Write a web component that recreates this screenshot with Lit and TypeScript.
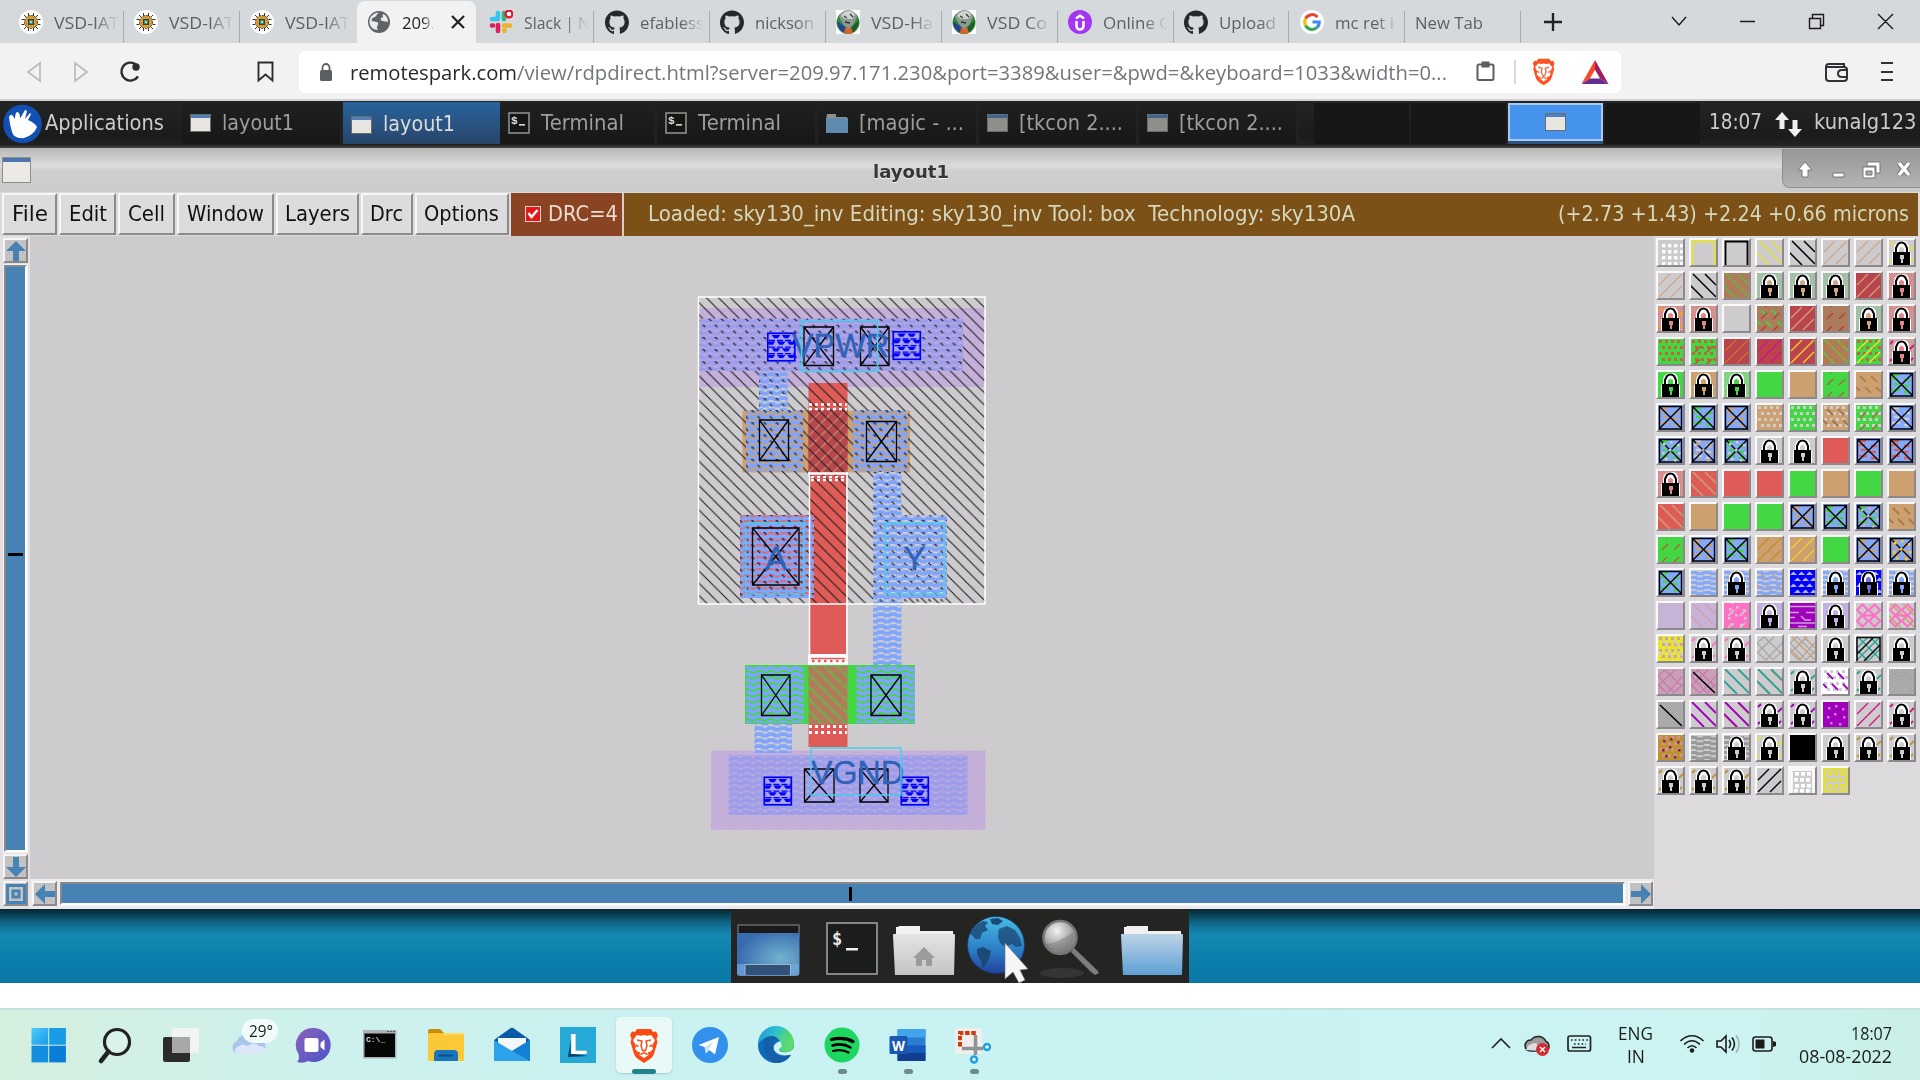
import { LitElement, html, svg, css } from "lit";
import { customElement, property } from "lit/decorators.js";

/** Text stretched horizontally to a given advance width. */
@customElement("fit-text")
class FitText extends LitElement {
  @property({ type: Number }) w = 0;
  static styles = css`
    :host { display: inline-block; white-space: pre; flex: none; }
    .run { display: inline-block; transform-origin: 0 50%; }
  `;
  firstUpdated() {
    const run = this.renderRoot.querySelector(".run") as HTMLElement;
    const natural = run.getBoundingClientRect().width;
    this.style.width = `${this.w}px`;
    if (natural) run.style.transform = `scaleX(${this.w / natural})`;
  }
  render() {
    return html`<span class="run"><slot></slot></span>`;
  }
}

const T = (text: any, w: number) => html`<fit-text .w=${w}>${text}</fit-text>`;

/* ---------- browser icons ---------- */
const chip = svg`<circle cx="12" cy="12" r="12" fill="#fff"/>
  <g stroke="#333" stroke-width="1" fill="none"><path d="M5 5l3 3M19 5l-3 3M5 19l3-3M19 19l-3-3M2.500 9.500h3M2.500 14.500h3M18.500 9.500h3M18.500 14.500h3M9.500 3v3M14.500 3v3M9.500 18v3M14.500 18v3"/></g>
  <circle cx="12" cy="12" r="6.500" fill="#d99a35" stroke="#5a3d12" stroke-width="1" stroke-dasharray="2 1"/><rect x="9" y="9" width="6" height="6" fill="#1d4d46"/><rect x="10.500" y="10.500" width="3" height="3" fill="#8fd6c0"/>`;
const github = svg`<path fill="#24292e" d="M12 .5C5.400.5 0 5.800 0 12.500c0 5.300 3.400 9.800 8.200 11.400.6.1.8-.3.8-.6v-2.200c-3.300.7-4-1.400-4-1.400-.6-1.400-1.400-1.800-1.400-1.800-1-.7.1-.7.1-.7 1.200.1 1.900 1.200 1.900 1.200 1.100 1.900 2.800 1.300 3.500 1 .1-.8.4-1.300.8-1.600-2.700-.3-5.500-1.300-5.500-6 0-1.300.5-2.300 1.200-3.200-.1-.3-.5-1.500.1-3.200 0 0 1-.3 3.300 1.200a11.500 11.500 0 0 1 6 0c2.300-1.500 3.300-1.200 3.300-1.200.7 1.700.2 2.900.1 3.200.8.8 1.200 1.900 1.200 3.200 0 4.600-2.800 5.600-5.500 5.900.4.400.8 1.100.8 2.200v3.300c0 .3.200.7.8.6A12 12 0 0 0 24 12.500C24 5.800 18.600.5 12 .5z"/>`;
const vsd = svg`<rect width="24" height="24" fill="#fff"/><ellipse cx="12" cy="12.500" rx="11.500" ry="11.500" fill="#2e8a38"/><path d="M1 11q1 9 8 12l1-5z" fill="#283c9c"/><path d="M23 10q0 8-7 13l-1-5z" fill="#1d5c28"/><path d="M9 18l6-1 2 6q-5 2-9 0z" fill="#d3652a"/><path d="M3 7q3-7 9-7 7 0 9 7l-4 8-5 4-5-5z" fill="#8d9a93"/><path d="M5 6q3-5 8-5 4 0 6 4l-3 4H9z" fill="#cfd4cf"/><path d="M8 6l3 2M14 4l3 3M9 12l5 1" stroke="#333" stroke-width="1.300"/>`;
const globeIc = svg`<circle cx="12" cy="12" r="11" fill="#5f6368"/><path d="M12 3c-3 1-2 3-4 4-2 .5-4 2-3 4 2 1 5 0 6 2s-1 2-1 4 1 3 1 3c-6 0-9-5-8.500-9C3 6 8 2 12 3zM16 4c3 1 5 4 5 8-2 0-3-1-5-1s-3-2-2-3 2 0 2-1-1-2 0-3z" fill="#e8eaec"/>`;
const slack = svg`<g stroke-width="4.600" stroke-linecap="round" fill="none"><path d="M3 9h5" stroke="#36c5f0"/><path d="M9 3v6" stroke="#36c5f0"/><path d="M15 3v6" stroke="#2eb67d"/><path d="M15 15.500h6" stroke="#ecb22e"/><path d="M15.500 20v1" stroke="#ecb22e"/><path d="M9 15v6M3 15.500h1" stroke="#e01e5a"/></g><circle cx="20" cy="4" r="3.400" fill="#fff" stroke="#e8112d" stroke-width="2.200"/>`;
const udemy = svg`<circle cx="12" cy="12" r="12" fill="#a435f0"/><path d="M8 8.500l4-3 4 3M8.500 11v5a3.500 3.500 0 0 0 7 0v-5" fill="none" stroke="#fff" stroke-width="2.600"/>`;
const google = svg`<circle cx="12" cy="12" r="12" fill="#fff"/><g fill="none" stroke-width="3"><path d="M17.500 7A7.300 7.300 0 0 0 5.600 8.500" stroke="#ea4335"/><path d="M5.600 8.500a7.300 7.300 0 0 0 0 7" stroke="#fbbc05"/><path d="M5.600 15.500a7.300 7.300 0 0 0 11.200 2.200" stroke="#34a853"/><path d="M16.800 17.700A7.300 7.300 0 0 0 19.300 12H12.500" stroke="#4285f4"/></g>`;
const lionShape = "M8 1h14l2 3 3-.5 2 3.500-1.500 4 1 3-3.500 12q-1 3-4 5l-6 4-6-4q-3-2-4-5L1.500 14l1-3L1 7l2-3.500L6 4z";
const lionFace = svg`<path fill="#fff" d="M8 7l4 .8L15 7l3 .8L22 7l4 5-3 6 1 3-3 3-2 0 .5 3-4.500 3-4.500-3L11 24l-2 0-3-3 1-3-3-6z"/><g fill="none" stroke="currentColor" stroke-width="1.500"><path d="M8 12l5 1-1 4.500 1 3.500M22 12l-5 1 1 4.500-1 3.500M12.500 21.500l2.500 1.500 2.500-1.500M15 23v2M11.500 26.500l3.500-2 3.500 2M6.500 17l3 1.500M23.500 17l-3 1.500"/></g>`;
const ico = (body: any, size = 24, vb = "0 0 24 24") => html`<svg class="ico" width=${size} height=${size} viewBox=${vb}>${body}</svg>`;

const TABS: { icon?: any; label: string; w: number; active?: boolean }[] = [
  { icon: chip, label: "VSD-IAT", w: 65 },
  { icon: chip, label: "VSD-IAT", w: 65 },
  { icon: chip, label: "VSD-IAT", w: 65 },
  { icon: globeIc, label: "209.", w: 33, active: true },
  { icon: slack, label: "Slack | N", w: 66 },
  { icon: github, label: "efabless", w: 64 },
  { icon: github, label: "nickson", w: 59 },
  { icon: vsd, label: "VSD-Ha", w: 62 },
  { icon: vsd, label: "VSD Co", w: 60 },
  { icon: udemy, label: "Online C", w: 67 },
  { icon: github, label: "Upload", w: 57 },
  { icon: google, label: "mc ret i", w: 59 },
  { label: "New Tab", w: 68 },
];

/* ---------- remote desktop panel ---------- */
const winIc = (dim = false) => html`<svg width="21" height="18" viewBox="0 0 21 18"><rect width="21" height="18" fill=${dim ? "#8f8e8a" : "#e6e5e0"}/><rect width="21" height="4" fill=${dim ? "#3f6492" : "#4f7fbd"}/><rect x=".5" y=".5" width="20" height="17" fill="none" stroke="#6b6b69"/></svg>`;
const termIc = html`<svg width="22" height="22" viewBox="0 0 22 22"><rect x="1" y="1" width="20" height="20" fill="#141515" stroke="#8d8d8b" stroke-width="1.600"/><text x="3" y="11.500" font-family="Liberation Mono" font-weight="700" font-size="11" fill="#ddd">$</text><rect x="11" y="12" width="6" height="1.700" fill="#ccc"/></svg>`;
const dirIc = html`<svg width="22" height="19" viewBox="0 0 22 19"><path d="M1 0h9v3h11v3H0z" fill="#8d8f8e"/><rect x="0" y="4" width="22" height="15" fill="#5f8bae"/></svg>`;
const TASKS = [
  { icon: winIc(), label: "layout1", w: 72, box: 161, cls: "" },
  { icon: winIc(), label: "layout1", w: 72, box: 156.5, cls: "on" },
  { icon: termIc, label: "Terminal", w: 83, box: 157, cls: "" },
  { icon: termIc, label: "Terminal", w: 83, box: 161, cls: "" },
  { icon: dirIc, label: "[magic - ...", w: 105, box: 161.5, cls: "" },
  { icon: winIc(true), label: "[tkcon 2....", w: 104, box: 160, cls: "" },
  { icon: winIc(true), label: "[tkcon 2....", w: 104, box: 160, cls: "" },
];

const MENUS = [
  { label: "File", box: 55, w: 36 },
  { label: "Edit", box: 57, w: 38 },
  { label: "Cell", box: 56.5, w: 37 },
  { label: "Window", box: 97, w: 77 },
  { label: "Layers", box: 83, w: 65 },
  { label: "Drc", box: 52, w: 33 },
  { label: "Options", box: 94.5, w: 75 },
];

/* ---------- layer palette ---------- */
const G = "#43d843", N = "#cda070", R = "#de5b58", DR = "#ba444e", BR = "#ad7c5c", BL = "#84a8fa", GY = "#cfcccf", TN = "#d2a88a", PU = "#c4b0dc", VI = "#a000bc", PK = "#ff70c4", TE = "#2ba296", YE = "#e8e52e", GO = "#b9952c";

/** Layer tile: op codes joined by "|", each "name,color". */
const TILES: string[] = [
  "g,#fff", `f,${YE}`, "f,#000", `d,${YE}`, "d,#000", `u,${TN}`, `u,${TN}`, `c,${YE}|L`,
  `u,${TN}`, "d,#000", `b,${BR}|d,#6ab33e`, `k,#7fb585|L,${TN}`, `k,#7fb585|L,${TN}`, `k,#7fb585|L,${TN}`, `b,${DR}|u,${N}`, `k,${R}|L,#e2858c`,
  `k,${R}|c,#f2a51c|L,#e2858c`, `k,${R}|L,#e2858c`, "", `b,${BR}|e,#4fc83f|v,#c0403c`, `b,${DR}|u,${N}`, `b,${BR}|v,#b4433f`, `k,#7fb585|L,${TN}`, `k,${R}|L,#e2858c`,
  `b,${G}|h,#c8633f`, `b,${G}|h,#c8633f|v,#c0503c`, `b,${DR}|u,#c8722e`, `b,${DR}|u,#cf1580`, `b,${DR}|u,#f7d12b`, `b,${BR}|d,#6cc23c|u,#c87838`, `b,${G}|h,#c8633f|u,#e8f22e`, `k,#c9807c|c,#cf1580|L,#e2858c`,
  `b,${G}|L,${G}`, `b,${N}|L,${N}`, `k,${G}|L,${G}`, `b,${G}`, `b,${N}`, `b,${G}|v,#a2703f`, `b,${N}|e,#b17e52`, `x,${G}`,
  `x,${N}`, `x,${G}`, `x,${N}`, `b,${N}|h,${GY}`, `b,${G}|h,${GY}`, `b,${N}|h,${GY}|e,#9f7550`, `b,${G}|h,${GY}|v,#a2703f`, `x,${GY}`,
  `x,${G}|h2,${GY}`, `x,${GY}|h2,${N}`, `x,${G}|h2,${GY}`, "L", "L", `b,${R}`, `x,${R}`, `x,${R}`,
  `k,${R}|L,#e2858c`, `b,${R}|d,${N}`, `b,${R}`, `b,${R}`, `b,${G}`, `b,${N}`, `b,${G}`, `b,${N}`,
  `b,${R}|d,${N}`, `b,${N}`, `b,${G}`, `b,${G}`, `x,${N}`, `x,${G}`, `x,${G}|h2,#d9a0c8`, `b,${N}|e,#a8794a`,
  `b,${G}|v,#a2703f`, `x,${N}`, `x,${G}`, `b,${N}|u,#c38b2e`, `b,${N}|u,#f0cf2b`, `b,${G}`, `x,${N}`, `x,${N}|h2,#f0cf2b`,
  `x,${G}`, `w,${BL}`, `w,${BL}|L,${BL}`, `w,${BL}|e,#aaa0b4`, "m,#0000fa", `w,${BL}|L,${BL}`, "m,#0000fa|L,#7070e0", `w,${BL}|L,${BL}`,
  `b,${PU}|k,#c9b6cf`, `b,${PU}|k,#c9b6cf|d,#cfa0b4`, `b,${PK}|v,${GY}|h2,${GY}`, `b,${PU}|L,${PU}`, `b,${VI}|j,#c9a2d6`, `b,${PU}|L,${PU}`, `z,${PK}`, `z,${PK}|d,${N}`,
  `b,${YE}|h,#d0a2a6|e,#cfcccf`, `c,${PK}|L`, `c,${PK}|L`, "y,#a5a3a5", `y,#a5a3a5|d,${N}`, "L", `d,${TE}|u,${TE}|F`, "L",
  `k,#c678a6|y,#c678a6`, `k,#c678a6|y,#c678a6|s,#000`, `d3,${TE}`, `d,${N}|d3,${TE}`, `c,${TE}|L`, `b,#fff|h,${GY}|e,${VI}`, `c,${TE}|L`, "k,#8c8c8c|d,#a6a6a6",
  "k,#8c8c8c|s,#000", `d3,${VI}`, `d,${N}|d3,${VI}`, `c,${VI}|L`, `c,${VI}|L`, `b,${VI}|h2,#c77cd6`, "u,#d1157e", "c,#d1157e|L",
  `b,${GO}|h,#dc8aa0|h2,#8a1a6a`, "w,#9a9a9a", "w,#9a9a9a|L", `c,${YE}|L`, "b,#000", "L", `c,${GO}|L`, `c,${GO}|L`,
  `c,${GO}|L`, `c,${GO}|L`, `c,${GO}|L`, "u,#000", "q,#fff", "q,#e5e22c",
];

const op = (code: string) => {
  const [k, c] = code.split(",");
  switch (k) {
    case "b": return svg`<rect width="25" height="25" fill=${c}/>`;
    case "g": return svg`${[5, 11, 17, 23].map((y) => [5, 11, 17, 23].map((x) => svg`<rect x=${x - 1} y=${y - 1} width="3.400" height="3.400" fill=${c}/>`))}`;
    case "q": return svg`<path d="M1.500 25V1.500h22V25" fill="none" stroke=${c} stroke-width="2.500"/>${[5, 11, 17, 22].map((y, j) => [5, 11, 17].map((x) => svg`<rect x=${x - (j % 2) * 1} y=${y - 1} width="4" height="3.600" fill=${c}/>`))}`;
    case "h": return svg`${[1, 7, 13, 19].map((y, j) => [1, 7, 13, 19].map((x) => svg`<rect x=${x + (j % 2) * 3} y=${y} width="3" height="3" fill=${c}/>`))}`;
    case "h2": return svg`${[[5, 5], [12, 3], [19, 6], [4, 14], [20, 14], [7, 20], [16, 21], [11, 11]].map(([x, y]) => svg`<rect x=${x} y=${y} width="2.500" height="2.500" fill=${c}/>`)}`;
    case "f": return svg`<path d="M1.500 25V1.500h22V25" fill="none" stroke=${c} stroke-width="1.800"/>`;
    case "d": return svg`<path d="M-1 12L12 25M2 1L25 24M14 1L25 12" stroke=${c} stroke-width="1.500"/>`;
    case "d3": return svg`<path d="M0 12L13 25M1 0L25 24M14 0L25 11" stroke=${c} stroke-width="1.900"/>`;
    case "s": return svg`<path d="M2 3L24 24" stroke=${c} stroke-width="1.600"/>`;
    case "u": return svg`<path d="M1 12L12 1M1 24L24 1M13 24L24 13" stroke=${c} stroke-width="1.400"/>`;
    case "v": return svg`<path d="M4 13l6-6M16 13l6-6M4 25l5-5M16 25l5-5M8 1l1-1" stroke=${c} stroke-width="1.600"/>`;
    case "e": return svg`<path d="M4 4l6 6M15 4l6 6M9 15l6 6M20 15l5 5M0 15l4 4" stroke=${c} stroke-width="1.800"/>`;
    case "k": return svg`<rect width="25" height="25" fill=${c} mask="url(#chk)"/>`;
    case "c": return svg`<path d="M1 5l3-3M21 10l4-4M1 22l2-2M21 22l3-3" stroke=${c} stroke-width="1.800"/>`;
    case "j": return svg`<path d="M0 3.500h25M0 9.500h9M16 9.500h9M0 14.500h5M11 13l4 4h6M0 20h25M8 23.500h9" fill="none" stroke=${c} stroke-width="1.500"/>`;
    case "w": return svg`<g stroke=${c} stroke-width="2.900" fill="none">${[2.500, 7.500, 12.500, 17.500, 22.500].map((y) => svg`<path d="M0 ${y}h5l1 1.200h6l1-1.200h6l1 1.200h5"/>`)}</g>`;
    case "m": return svg`<rect width="25" height="25" fill=${c}/>${[2, 8, 14, 20].map((y, j) => [4, 12, 20].map((x) => svg`<path d="M${x - 4 + (j % 2) * 4} ${y + 3}l3.500-3.500 3.500 3.500z" fill="#b9b4f2"/>`))}`;
    case "x": return svg`<rect width="25" height="25" fill=${BL}/><path d="M3 7h6M15 8h6M5 12h5M12 14h8M3 18h8M15 20h6M2 3h8" stroke=${c} stroke-width="2.600"/><path d="M1.500 25V1.500h22V25M1 24h23M2 2l21 21M23 2L2 23" fill="none" stroke="#000" stroke-width="1.400"/>`;
    case "F": return svg`<path d="M1 25V1.500h23V25M8 25L24 9M1 18L17 2" fill="none" stroke="#111" stroke-width="1.600"/>`;
    case "z": return svg`<path d="M1 7l5.500-5.500L12 7l-5.500 5.500zM13 7l5.500-5.500L24 7l-5.500 5.500zM1 18l5.500-5.500L12 18l-5.500 5.500zM13 18l5.500-5.500L24 18l-5.500 5.500zM12 7l1 0M12 18h1M8 12.500h9" fill="none" stroke=${c} stroke-width="2"/>`;
    case "y": return svg`<path d="M0 7l7-6 18 17M0 7l16 17 9-9M25 7L9 24 0 16M17 1L0 17" fill="none" stroke=${c} stroke-width="1.100"/>`;
    case "L": return svg`<path d="M5 12V8q0-6 7.500-7T20 8v4l2 1v12H3V13z" fill="#fff"/><path d="M7 12V8l2-4q3.500-3 7 0l2 4v4" fill="#fff" stroke="#000" stroke-width="2"/><path d="M10 12V8.500l2.500-2 2.500 2V12z" fill=${c || GY}/><rect x="4" y="12" width="17" height="13" fill="#000"/><path d="M11 15h4v4h-1v4h-2v-4h-1z" fill=${c || GY}/>`;
  }
  return svg``;
};

/* ---------- layout canvas ---------- */
const contact = (x: number, y: number, w: number, h: number) =>
  svg`<path d="M${x} ${y}h${w}v${h}h${-w}zM${x} ${y}l${w} ${h}M${x + w} ${y}l${-w} ${h}" fill="none" stroke="#000" stroke-width="1.300"/>`;
const box = (x: number, y: number, x2: number, y2: number, fill: string) =>
  svg`<rect x=${x} y=${y} width=${x2 - x} height=${y2 - y} fill=${fill}/>`;
const cyan = (x: number, y: number, x2: number, y2: number) =>
  svg`<rect x=${x} y=${y} width=${x2 - x} height=${y2 - y} fill="none" stroke="#45d0ea" stroke-width="1.500"/>`;
/* Rows of downward and upward wedges alternate inside each via. */
const via = (x: number, y: number) => svg`<g transform="translate(${x} ${y})"><rect width="28.500" height="29" fill="#a6a2f2"/>
  ${[0, 1, 2, 3].map((j) => [0, 1, 2].map((i) => {
    const cx = j % 2 ? 4 + i * 10.2 : 9 + i * 10.2;
    return cx > 25 ? svg`` : svg`<path d="M${cx - 4.300} ${2.500 + j * 6.600}h8.600l-2.400 3.200h-3.800z" fill="#0000fa"/>`;
  }))}<path d="M2 8h25M2 14.600h25M2 21.200h25" stroke="#0000fa" stroke-width="1.300" stroke-dasharray="6 2"/>
  <rect x=".8" y=".8" width="27" height="27.500" fill="none" stroke="#0000fa" stroke-width="1.700"/></g>`;
const label = (t: string, x: number, y: number, w: number) =>
  svg`<text x=${x} y=${y} textLength=${w} lengthAdjust="spacingAndGlyphs" font-family="Liberation Sans" font-size="33" fill="#2f62b8" stroke="#2f62b8" stroke-width=".4">${t}</text>`;

const layout = svg`
  <defs>
    <pattern id="hatch" width="12.200" height="12.200" patternUnits="userSpaceOnUse" patternTransform="translate(6 0)"><path d="M-1 -1L13.200 13.200M-1 11.200L1 13.200M11.200 -1L13.200 1" stroke="#1a1a1a" stroke-width="1.050"/></pattern>
    <pattern id="li" width="12.200" height="6" patternUnits="userSpaceOnUse"><path d="M-1 2.200h6l1.500 1.400h4.500l1.200-1.400h1" fill="none" stroke="#7fa5fc" stroke-width="3.700"/></pattern>
    <pattern id="lip" width="12.200" height="6" patternUnits="userSpaceOnUse"><rect width="12.200" height="6" fill="#b3a5e2"/><path d="M-1 2.200h6l1.500 1.400h4.500l1.200-1.400h1" fill="none" stroke="#9c9eec" stroke-width="3.600"/><path d="M7.500 1h2" stroke="#d2b4c8" stroke-width="1"/></pattern>
    <pattern id="pts" width="12.200" height="12.200" patternUnits="userSpaceOnUse"><path d="M1 2h2M2.500 3.300h1.500M7 8h2M8.500 9.300h1.500" stroke="#111" stroke-width="1.200"/></pattern>
    <pattern id="met" width="2.400" height="2.400" patternUnits="userSpaceOnUse"><rect width="2.400" height="2.400" fill="#c8b8d8"/><rect width="1.200" height="1.200" fill="#c0a4dc"/><rect x="1.200" y="1.200" width="1.200" height="1.200" fill="#c4a8da"/></pattern>
    <pattern id="tanh" width="12.200" height="12.200" patternUnits="userSpaceOnUse"><path d="M-1 13.200L13.200 -1" stroke="#cc8a62" stroke-width="1.200"/></pattern>
    <pattern id="grh" width="12.200" height="12.200" patternUnits="userSpaceOnUse"><path d="M-1 -1L13.200 13.200" stroke="#6bb546" stroke-width="1.900"/></pattern>
  </defs>
  ${box(698, 308, 985, 387, "url(#met)")}
  ${box(742.5, 410.5, 910, 472.5, "#cda070")}
  ${box(808.5, 383, 847.5, 472, R)}
  ${box(808.5, 410, 847.5, 472, "#b7474f")}${box(808.5, 410, 847.5, 472, "url(#tanh)")}
  ${box(810, 472, 846, 654, R)}
  ${box(698, 297, 985, 604, "url(#hatch)")}
  ${box(698, 318.5, 963, 371, "url(#lip)")}
  ${box(740, 515, 814, 598, "#de6b70")}
  ${box(740, 515, 814, 598, "url(#li)")}
  ${box(759, 371, 787.5, 410, "#cfcccf")}${box(759, 371, 787.5, 387, "#c5b2da")}${box(759, 371, 787.5, 410, "url(#li)")}
  ${box(746, 411, 803, 471, "#cda070")}${box(853, 411, 908, 471, "#cda070")}
  ${box(746, 411, 803, 471, "url(#li)")}${box(853, 411, 908, 471, "url(#li)")}
  ${box(873, 472, 901.5, 515, "#cfcccf")}${box(873, 515, 947, 598, "#cfcccf")}${box(873, 598, 901.5, 604, "#cfcccf")}
  ${box(873, 472, 901.5, 515, "url(#li)")}${box(873, 515, 947, 598, "url(#li)")}${box(873, 598, 901.5, 665, "url(#li)")}
  ${box(698, 318.5, 963, 371, "url(#pts)")}${box(759, 371, 787.5, 410, "url(#pts)")}
  ${box(746, 410, 803, 471, "url(#pts)")}${box(853, 410, 908, 471, "url(#pts)")}
  ${box(873, 472, 901.5, 515, "url(#pts)")}${box(873, 515, 947, 602, "url(#pts)")}${box(740, 515, 814, 598, "url(#pts)")}
  <path d="M809 404.500h38M809 409h38M811 480h36" stroke="#fff" stroke-width="2.500" stroke-dasharray="3 3"/>
  <path d="M808 473.500h40" stroke="#fff" stroke-width="2.500"/><path d="M811 477h35" stroke="#fff" stroke-width="2" stroke-dasharray="3 3"/>
  <path d="M809.500 473v182M847 473v182" stroke="#fff" stroke-width="1.500"/>
  <path d="M808 654h40v12h-40z" fill="#fff"/><path d="M811 658.500h34" stroke="${R}" stroke-width="1.500"/><path d="M812 661h33" stroke="${R}" stroke-width="2.400" stroke-dasharray="2.500 3.500"/>
  <rect x="698.500" y="297" width="286.500" height="307" fill="none" stroke="#fff" stroke-width="1.500"/>
  ${contact(759.5, 420, 29, 40.5)}${contact(866.5, 421.5, 30, 40)}
  ${cyan(746, 523, 803.5, 594)}${cyan(885.5, 523, 944, 594)}${contact(752.5, 528, 46.5, 57)}
  ${label("A", 765, 570, 22)}${label("Y", 903.5, 570, 22)}
  ${contact(804, 327, 29.5, 38.5)}${contact(860.5, 327, 28.5, 38.5)}${via(767, 332.5)}${via(892.5, 331)}
  ${label("VPWR", 792, 357, 97)}${cyan(801.5, 320.5, 877.5, 371.5)}
  ${box(745, 665, 915, 724, G)}${box(746, 666, 804, 723, "url(#li)")}${box(856.5, 666, 915, 723, "url(#li)")}
  ${box(808.5, 666, 847.5, 724, "#b07c5c")}${box(808.5, 666, 847.5, 724, "url(#grh)")}
  ${box(808.5, 724, 847.5, 747, R)}<path d="M809 726.500h38M809 732.500h38" stroke="#fff" stroke-width="3" stroke-dasharray="3 3"/>
  ${contact(761.5, 675, 28.5, 40.5)}${contact(871, 675, 30, 40.5)}
  ${box(711, 750.5, 985.5, 830, "url(#met)")}${box(754.5, 724, 792, 753, "url(#li)")}
  ${box(728.5, 755, 967.5, 815, "url(#lip)")}
  ${contact(804.5, 769, 29.5, 33)}${contact(860, 769, 28, 33)}${via(763.5, 776.5)}${via(900.5, 776.5)}
  ${label("VGND", 811, 783.5, 93)}${cyan(811, 748, 901, 795)}`;

/* ---------- desktop dock ---------- */
const dock = html`<svg width="458" height="74" viewBox="731 909 458 74">
  <defs>
    <radialGradient id="dk2" cx=".7" cy=".6" r=".7"><stop offset="0" stop-color="#72b4cf"/><stop offset="1" stop-color="#396aaf"/></radialGradient>
    <linearGradient id="fg" x2="0" y2="1"><stop offset="0" stop-color="#e4e4e4"/><stop offset="1" stop-color="#c4c4c4"/></linearGradient>
    <linearGradient id="fb" x2="0" y2="1"><stop offset="0" stop-color="#bdd3e6"/><stop offset="1" stop-color="#5ea0d4"/></linearGradient>
    <linearGradient id="gl" x2="0" y2="1"><stop offset="0" stop-color="#48bde6"/><stop offset=".6" stop-color="#2a7cc4"/><stop offset="1" stop-color="#23419a"/></linearGradient>
    <radialGradient id="mg" cx=".4" cy=".3" r=".8"><stop offset="0" stop-color="#f2f2f2"/><stop offset="1" stop-color="#686868"/></radialGradient>
  </defs>
  <rect x="738" y="925" width="61" height="12" fill="#1a1a1a" stroke="#8c8c8c"/>
  <rect x="737" y="933" width="62.500" height="42.500" rx="2" fill="url(#dk2)"/><path d="M737 964h8v11h46v-11h8v9q0 3-3 3h-56q-3 0-3-3z" fill="#76abe0" opacity=".7"/><path d="M745 975v-10.500h45.500V975" fill="#32527a" stroke="#9fb5cd"/>
  <rect x="827" y="923" width="50" height="51" fill="#1b1c1c" stroke="#858585" stroke-width="2"/><text x="832" y="945" font-family="DejaVu Sans Mono" font-weight="700" font-size="17" fill="#e4e4e4">$</text><rect x="846" y="948" width="12" height="2.500" fill="#eee"/>
  <path d="M896 933v-6h2l1-1h21v5h33v7h-58z" fill="#f2f2f2"/><path d="M893 935q0-1 1-1h60q1 0 1 1l-1 40h-59z" fill="url(#fg)"/><path d="M924 947l11 11h-3v8h-6v-6h-4v6h-6v-8h-3z" fill="#9b9b9b"/>
  <circle cx="996" cy="945" r="28.500" fill="url(#gl)" stroke="#163a6e" stroke-width=".7"/><g fill="#1c4a78"><path d="M970 934q3-9 13-13l5 1-3 4 3 4-6 3-2 6-5 0-2-3z" opacity=".85"/><path d="M977 949l6-2 8 4-2 8-6 10-2-8-4-7z"/><path d="M998 937l1-8 8-3 8 4 5 8 2 8-6 1-4-3-7 3-5-4z" opacity=".8"/><path d="M990 919l8-1 5 3-5 4-6-1z"/></g>
  <path d="M1005 943v36l8-7 6 11 6-3-5-10 8-1z" fill="#f6f6f6" stroke="#777" stroke-width=".6"/>
  <ellipse cx="1062" cy="973" rx="22" ry="5" fill="#494a49" opacity=".45"/><path d="M1074 948l23 22 2 3-4 2-4-3-20-20z" fill="#7d7d7d"/><circle cx="1060" cy="937.500" r="16.500" fill="url(#mg)" stroke="#767676" stroke-width="2.500"/><path d="M1046 944q9 0 28-12 0 18-14 20-10 0-14-8z" fill="#777" opacity=".45"/>
  <path d="M1124 933v-6h2l1-1h21v5h33v7h-58z" fill="#f0f0f0"/><path d="M1121 935q0-1 1-1h60q1 0 1 1l-1 40h-59z" fill="url(#fb)"/>
</svg>`;

/* ---------- host taskbar ---------- */
const APPS = [
  svg`<defs><linearGradient id="wn" x2="1" y2="1"><stop offset="0" stop-color="#4fcbfa"/><stop offset="1" stop-color="#1a9be6"/></linearGradient></defs><rect x=".5" y="1" width="16.700" height="16.700" fill="url(#wn)"/><rect x="18.200" y="1" width="16.700" height="16.700" fill="#1a9be6"/><rect x=".5" y="18.700" width="16.700" height="16.700" fill="#148fe0"/><rect x="18.200" y="18.700" width="16.700" height="16.700" fill="#0a7dd8"/>`,
  svg`<circle cx="20" cy="15" r="12.500" fill="#dff4f2" fill-opacity=".6" stroke="#222" stroke-width="3.200"/><path d="M11.500 24.500L4 34" stroke="#222" stroke-width="4.500" stroke-linecap="round"/>`,
  svg`<rect x="0" y="10" width="27" height="25" rx="2" fill="#2b2b2b"/><rect x="9" y="1" width="27" height="25" rx="2" fill="#f4f4f4" opacity=".9"/><rect x="9" y="10" width="18" height="16" fill="#a8a8a8"/>`,
  svg`<path d="M7 27a7 7 0 0 1 0-13 9 9 0 0 1 16-2 8 8 0 0 1 8 15z" fill="#aac4ee"/><path d="M6 27a5 5 0 0 1 3-8q4-3 8 0 8-5 12 0 7 0 6 5-1 3-4 3z" fill="#dce6fa"/><rect x="12" y="-8" width="36" height="24" rx="12" fill="#f1fbfa"/>`,
  svg`<defs><linearGradient id="ch" x2="1" y2="1"><stop offset="0" stop-color="#8b63b8"/><stop offset="1" stop-color="#4c52cc"/></linearGradient></defs><path d="M18 1a17 17 0 1 1-6 33q-5 3-11 1 3-3 1.500-8A17 17 0 0 1 18 1z" fill="url(#ch)"/><rect x="8.500" y="11" width="14" height="14" rx="2" fill="#fff"/><path d="M24.500 16l4-3.500v11l-4-3.500z" fill="#fff"/>`,
  svg`<rect x="1" y="3" width="33.500" height="28.500" fill="#aeb2b6"/><rect x="2.500" y="6.500" width="30.500" height="23.500" fill="#070707"/><text x="4" y="14.500" font-family="Liberation Mono" font-weight="700" font-size="8" fill="#ddd">C:\\_</text><path d="M25 4.500h8" stroke="#555" stroke-dasharray="2 1"/>`,
  svg`<path d="M0 4q0-2 2-2h10l4 4v5H0z" fill="#c98c09"/><rect x="0" y="6" width="36" height="28" rx="1" fill="#fbc937"/><path d="M0 8h14l3-2h19v2z" fill="#ffd95a"/><path d="M6 34V27q0-4 4-4h16q4 0 4 4v7z" fill="#1976bd"/><path d="M10 28.500h15" stroke="#0c4d86" stroke-width="2"/>`,
  svg`<path d="M0 13L16 1.500q2-1.500 4 0L36 13v6H0z" fill="#0a5aa8"/><path d="M4 11h28v12H4z" fill="#f5f8fb"/><path d="M0 13l18 11 18-11v21H0z" fill="#2ba2ea"/><path d="M36 13v21L18 24z" fill="#1480d2"/>`,
  svg`<rect width="36" height="36" fill="#27a9d8"/><path d="M12 6L8 30l20-1-15-2z" fill="#0e3a66"/><text x="9" y="27" font-family="Liberation Sans" font-weight="700" font-size="30" fill="#fff">L</text>`,
  svg`<g transform="translate(3 1)" color="#fb4b14"><path d=${lionShape} fill="#fb4b14"/>${lionFace}</g>`,
  svg`<circle cx="18" cy="18" r="18" fill="#3390ec"/><path d="M6.500 18L27 10l-4 17.500-6-4.500-3 3.500-1.500-6.500z" fill="#fff"/><path d="M13 20.500l8.500-6-5.500 8.500-2 2.500z" fill="#c3def8"/>`,
  svg`<defs><linearGradient id="eg" x2="1" y2=".4"><stop offset="0" stop-color="#2390d8"/><stop offset=".5" stop-color="#2cc0cf"/><stop offset="1" stop-color="#66e04a"/></linearGradient></defs><circle cx="18" cy="18" r="18" fill="#0f6cbd"/><path d="M0 17A18 18 0 0 1 36 17q0 8-8 8-6 0-7-3 3-3 1-8-6-8-15-3-4 2-7 6z" fill="url(#eg)"/><path d="M7 11q7-4 12 0-7 4-4 12 4 9 18 5-6 9-17 8Q3 29 7 11z" fill="#155fa8"/><path d="M22 14q4 5-1 8 1 4 8 3 4 0 7-4v7l-5 0q-11 2-15-5-2-6 6-9z" fill="#cdf3f2"/><path d="M22 14q4 4 0 8 2 3 6 3 7 0 8-8-2-9-14-9z" fill="#55d68a" opacity=".55"/>`,
  svg`<circle cx="18" cy="18" r="17.500" fill="#1ed760"/><g fill="none" stroke="#000" stroke-linecap="round"><path d="M7.500 12.500q12-3 21.500 2" stroke-width="3.200"/><path d="M8.500 18.500q10-3 18 2" stroke-width="2.600"/><path d="M9 24q9-2.500 15.500 1.500" stroke-width="2.200"/></g>`,
  svg`<rect x="7.500" y="2" width="28" height="32" rx="1.500" fill="#2b7cd3"/><rect x="7.500" y="2" width="28" height="8.500" fill="#41a5ee"/><rect x="7.500" y="18.500" width="28" height="8" fill="#185abd"/><rect x="7.500" y="26" width="28" height="8" fill="#103f91"/><rect x="-.5" y="9" width="18" height="18" rx="1.500" fill="#1b57b5"/><text x="2" y="23.500" textLength="13" lengthAdjust="spacingAndGlyphs" font-family="Open Sans" font-weight="700" font-size="14" fill="#fff">W</text>`,
  svg`<rect x="-1" y="1" width="27" height="26" rx="2" fill="#f1eeee"/><path d="M4 19.500V6h16" fill="none" stroke="#cf3c10" stroke-width="4" stroke-dasharray="4.500 1.700"/><path d="M19.500 8v20M6 21.500h21" stroke="#8f9396" stroke-width="3.500"/><circle cx="31" cy="20" r="3" fill="#e9fbff" stroke="#1ea0e0" stroke-width="2.400"/><circle cx="18" cy="32.500" r="3" fill="#e9fbff" stroke="#1ea0e0" stroke-width="2.400"/>`,
];

@customElement("app-root")
class AppRoot extends LitElement {
  static styles = css`
    :host { display: flex; flex-direction: column; width: 1920px; height: 1080px; overflow: hidden; background: #fff; font-family: "Open Sans", "Noto Sans", sans-serif; }
    svg { display: block; flex: none; }
    .row { display: flex; flex: none; box-sizing: border-box; }

    .tabs { height: 43px; background: #d5d9dc; padding-left: 8px; align-items: stretch; font-size: 17px; color: #5b6167; }
    .tab { width: 115.900px; flex: none; box-sizing: border-box; display: flex; align-items: center; padding-left: 10.500px; margin-top: 1px; position: relative; line-height: 43px; }
    .tab .ico { margin-right: 11px; }
    .tab .clip { width: 68px; overflow: hidden; mask-image: linear-gradient(90deg, #000 60%, transparent 95%); }
    .tab .wide { width: 80px; mask-image: none; margin-left: -1px; }
    .tab::after { content: ""; position: absolute; right: 0; top: 10px; width: 1px; height: 32px; background: #a9adb1; }
    .tab.on { width: 119px; background: #f2f2f2; border-radius: 8px 8px 0 0; color: #222; margin-left: 1px; margin-right: 2.500px; }
    .tab.on::after, .tab.pre::after { display: none; }
    .tab.on .clip { width: 34px; margin-right: 15px; }
    .winctl { margin-left: auto; display: flex; align-items: center; }
    .plus { margin-left: 22.500px; align-self: center; }

    .toolbar { height: 58px; background: #f2f2f2; border-bottom: 2px solid #cfd1d3; align-items: center; }
    .addr { display: flex; align-items: center; height: 42px; width: 1322px; background: #fff; border-radius: 6px; margin-left: 25px; margin-top: 1px; font-size: 20.500px; color: #72767a; }
    .addr .host { color: #27292c; }
    .addr fit-text { margin-left: 17px; line-height: 42px; }

    .panel { height: 47px; background: linear-gradient(#232524, #1b1b1b 80%, #242424); border-bottom: 2px solid #3c3d3c; font-family: "DejaVu Sans", sans-serif; font-size: 20.500px; color: #9d9d9a; align-items: flex-start; }
    .apps { display: flex; align-items: center; width: 182px; color: #cbcbc8; height: 45px; line-height: 40px; }
    .apps svg { margin: 0 3px; }
    .apps fit-text { margin-top: -2px; }
    .task { display: flex; align-items: center; height: 42px; box-sizing: border-box; padding-left: 8px; margin-top: 1px; background: linear-gradient(#1f2020, #171717); border-radius: 3px; border-right: 3px solid #202121; flex: none; }
    .task fit-text { margin-left: 11px; line-height: 38px; margin-top: -1px; }
    .task.on { background: linear-gradient(#29639c, #28456a); border-right: 0; border-radius: 0; color: #dcdcda; }
    .task.on svg { margin-top: 4px; }
    .task.on fit-text { margin-top: 1px; }
    .pager { display: flex; margin-left: 15px; padding-top: 2px; }
    .desk { width: 95px; height: 41px; margin-right: 2px; background: #171717; }
    .desk.on { background: #4593ec; box-sizing: border-box; border: 2px solid #a7c9f2; height: 38px; box-shadow: 0 3px 0 #2b537e; display: flex; align-items: center; justify-content: center; }
    .clock { margin-left: auto; padding-right: 4px; line-height: 43px; color: #cbcbc8; display: flex; }

    .title { height: 44px; background: linear-gradient(#b7b7b7, #cfcfcf 25%, #dcdcdc 42%, #cfcfcf 50%, #cbcbcb); align-items: center; font: bold 18px "DejaVu Sans", sans-serif; color: #363636; text-shadow: 0 1px 1px #f5f5f5; justify-content: space-between; }
    .title .cluster { align-self: flex-start; margin-top: 1px; width: 138px; height: 39px; background: linear-gradient(#969696, #b4b4b4); border-radius: 0 0 0 8px; border: 1px solid #8d8d8d; border-top: 0; border-right: 0; box-sizing: border-box; display: flex; align-items: center; }
    .title .mid { flex: 1; padding: 2px 0 0 841px; }

    .menus { height: 44px; background: #dddadd; padding: 1px 2px 0; font: 20.500px "DejaVu Sans", sans-serif; color: #111; border-top: 0; }
    .menu { height: 42px; margin-right: 2px; box-sizing: border-box; border: 2px solid; border-color: #f8f7f8 #8c8a8c #8c8a8c #f8f7f8; background: #dedbde; display: flex; justify-content: center; line-height: 38px; }
    .drc { width: 113px; height: 43px; background: #8a4424; color: #ecdccf; display: flex; align-items: center; box-sizing: border-box; padding: 0 0 1px 14px; border-right: 2px solid #d8cfc4; }
    .drc fit-text { margin-left: 7px; }
    .status { flex: 1; height: 43px; box-sizing: border-box; background: #7b5117; color: #d6d8be; display: flex; justify-content: space-between; align-items: center; padding: 0 9px 2px 24px; }

    .body { height: 673px; background: #dddadd; }
    .left { width: 30px; display: flex; flex-direction: column; align-items: center; padding: 2px 0 0 1px; gap: 2px; box-sizing: border-box; background: #e2e0e2; }
    .btn { width: 25px; height: 25px; box-sizing: border-box; border: 2px solid; border-color: #f6f5f6 #8a888a #8a888a #f6f5f6; background: #c3c1c1; display: flex; align-items: center; justify-content: center; flex: none; }
    .trough { background: #4682b4; border: 2px solid; border-color: #85878b #fff #fff #85878b; box-sizing: border-box; display: flex; align-items: center; justify-content: center; outline: 1px solid #f4f3f4; }
    .vt { width: 23px; height: 587px; }
    .vt .mark { width: 15px; height: 3px; background: #000; margin-bottom: 9px; }
    .mid-col { width: 1624px; display: flex; flex-direction: column; }
    .canvas { background: #cecbce; height: 643px; overflow: hidden; }
    .hbar { display: flex; align-items: center; height: 30px; padding: 0 0 1px 2px; gap: 3px; background: #ebe9eb; box-sizing: border-box; }
    .ht { width: 1565px; height: 23px; }
    .ht .mark { width: 3px; height: 14px; background: #000; margin-left: 15px; }
    .pal { display: grid; grid-template-columns: repeat(8, 29px); gap: 4px 4.050px; align-content: start; padding: 1.500px 0 0 2px; }
    .tile { width: 29px; height: 29px; box-sizing: border-box; border: 2px solid; border-color: #faf9fa #8b898b #8b898b #faf9fa; background: #cecbce; }

    .desktop { height: 74px; background: linear-gradient(#06262f, #0d6484 18%, #1488b2 34%, #0c80ac 65%, #0a78a6); justify-content: center; }
    .dock { background: #242523; border: 0; }
    .gap { height: 25px; }

    .taskbar { height: 72px; background: linear-gradient(90deg, #d5efdf, #cdf1ee 18%, #c8f2f2 45%, #cdf3f3 90%, #c9efe6); border-top: 2px solid #c4e2de; align-items: flex-start; padding-left: 16.300px; box-sizing: border-box; color: #1a1c1c; }
    .app { width: 66.080px; height: 56px; margin-top: 7px; display: flex; flex-direction: column; align-items: center; position: relative; z-index: 0; }
    .app svg { margin-top: 10px; overflow: visible; }
    .app .plate { position: absolute; inset: 0 5px; background: #e8f9f8; border-radius: 5px; box-shadow: 0 1px 2px #a5cccb; z-index: -1; }
    .ind { width: 9px; height: 5px; border-radius: 3px; background: #6e8a8b; margin-top: 6px; flex: none; }
    .app.on .ind { width: 24px; background: #23808d; }
    .badge { position: absolute; left: 34px; top: 2px; font-size: 16.500px; line-height: 24px; }
    .tray { margin-left: auto; display: flex; align-items: flex-start; padding-right: 28px; font-size: 17.500px; }
    .stack { display: flex; flex-direction: column; padding-top: 12px; }
    .stack fit-text { line-height: 22.500px; }
    .lang { align-items: center; margin-right: 26.500px; }
    .when { align-items: flex-end; margin-left: 21.500px; }
  `;

  render() {
    const active = TABS.findIndex((t) => t.active);
    return html`
      <div class="row tabs">
        ${TABS.map((t, i) => html`<div class="tab ${t.active ? "on" : ""} ${i === active - 1 ? "pre" : ""}">
          ${t.icon ? ico(t.icon) : ""}<div class="clip ${t.icon ? "" : "wide"}">${T(t.label, t.w)}</div>
          ${t.active ? html`<svg width="14" height="14" viewBox="0 0 14 14"><path d="M1 1l12 12M13 1L1 13" stroke="#222" stroke-width="2.200"/></svg>` : ""}
        </div>`)}
        <svg class="plus" width="18" height="18" viewBox="0 0 18 18"><path d="M9 0v18M0 9h18" stroke="#222" stroke-width="2.400"/></svg>
        <svg class="winctl" width="262" height="43" viewBox="1658 0 262 43"><g fill="none" stroke="#1b1b1b" stroke-width="1.400"><path d="M1672 17l7 8 7-8M1740 21.500h15M1809.500 18.500h11v10h-11zM1812.500 18v-3.500h11v11h-3M1878 14l15 15M1893 14l-15 15"/></g></svg>
      </div>
      <div class="row toolbar">
        <svg width="274" height="56" viewBox="0 43 274 56"><g fill="none" stroke-width="1.700" stroke="#b9bbbe"><path d="M40 63v18l-12-9zM75 63v18l12-9z"/></g>
          <path d="M136 64.500a9 9 0 1 0 2 12" fill="none" stroke="#2b2d31" stroke-width="2.400"/><circle cx="136" cy="67" r="3.700" fill="#2b2d31"/>
          <path d="M258.500 62.500h14v18l-7-6-7 6z" fill="none" stroke="#2b2d31" stroke-width="1.900"/></svg>
        <div class="addr">
          <svg width="34" height="42" viewBox="299 51 34 42"><rect x="320" y="70" width="12" height="11" rx="1.500" fill="#5b5f64"/><path d="M322.500 71v-3.500a3.500 3.500 0 0 1 7 0V71" fill="none" stroke="#5b5f64" stroke-width="1.800"/></svg>
          ${T(html`<span class="host">remotespark.com</span>/view/rdpdirect.html?server=209.97.171.230&amp;port=3389&amp;user=&amp;pwd=&amp;keyboard=1033&amp;width=0...`, 1097)}
          <svg width="174" height="42" viewBox="1447 51 174 42"><rect x="1477.500" y="64.500" width="16" height="15.500" rx="1.500" fill="none" stroke="#5b5f64" stroke-width="2"/><rect x="1481.500" y="61.500" width="8" height="6" fill="#5b5f64"/><path d="M1515 60v24" stroke="#c9cbcd" stroke-width="1.500"/>
            <g transform="translate(1532 58) scale(.78)" color="#fb5422"><path d=${lionShape} fill="#fb5422"/>${lionFace}</g>
            <path d="M1595 60l-13.500 24 8.500-5.500 5-9z" fill="#ff4724"/><path d="M1595 60l13.500 24-8.500-5.500-5-9z" fill="#9e1f63"/><path d="M1581.500 84h27l-8.500-5.500h-10z" fill="#662d91"/></svg>
        </div>
        <svg width="298" height="56" viewBox="1621 43 298 56"><g fill="none" stroke="#2f3236" stroke-width="2"><path d="M1845 64h-16q-3 0-3 3v11q0 3 3 3h15q3 0 3-3v-8q0-3-3-3h-17M1848 70h-6q-4 0-4 3.500t4 3.500h6M1844 67v-3"/><path d="M1881 63h12M1881 72h12M1881 80h12" stroke-width="2.200"/></g></svg>
      </div>

      <div class="row panel">
        <div class="apps"><svg width="39" height="40" viewBox="0 0 39 40"><circle cx="19.500" cy="20" r="19.300" fill="#1250b4"/><path d="M7 20l-1-7q2-4 4-1l2 3q0-6 2-7 3 0 3 6l1-1 4-7 2 1-2 8 5-6 1 1-3 6q7 3 9 7-3 8-13 11-10 1-12-6z" fill="#fff"/></svg>${T("Applications", 119)}</div>
        ${TASKS.map((t) => html`<div class="task ${t.cls}" style="width:${t.box}px">${t.icon}${T(t.label, t.w)}</div>`)}
        <div class="pager"><div class="desk"></div><div class="desk"></div><div class="desk on">${winIc()}</div><div class="desk"></div></div>
        <div class="clock">${T("18:07", 53)}
          <svg width="52" height="44" viewBox="1762 101 52 44"><path d="M1782 112l7 8h-4.500v9h-5v-9h-4.500zM1795 137l-7-8h4.500v-9h5v9h4.500z" fill="#f0f0ee"/></svg>${T("kunalg123", 102.5)}</div>
      </div>

      <div class="row title">
        <svg width="32" height="44" viewBox="0 148 32 44"><rect x="2.500" y="157.500" width="28" height="25" fill="#eceae6" stroke="#8e8e8e"/><rect x="3" y="158" width="27" height="4" fill="#4a74ac"/></svg>
        <div class="mid">${T("layout1", 76)}</div>
        <div class="cluster"><svg width="138" height="38" viewBox="1782 149 138 38"><g fill="#fff" stroke="#777" stroke-width="1"><path d="M1804 162l7 8h-4v7h-6v-7h-4z"/><path d="M1832 173h11v4h-11z"/><path d="M1866 162h13v11h-4v-7h-9zM1862 167h12v11h-12zM1865 171v4h6v-4z" fill-rule="evenodd"/></g><path d="M1898 163l10 12M1908 163l-10 12" stroke="#777" stroke-width="5.500"/><path d="M1898 163l10 12M1908 163l-10 12" stroke="#fff" stroke-width="3.500"/></svg></div>
      </div>

      <div class="row menus">
        ${MENUS.map((m) => html`<div class="menu" style="width:${m.box}px">${T(m.label, m.w)}</div>`)}
        <div class="drc"><svg width="16" height="16" viewBox="0 0 16 16"><rect width="16" height="16" fill="#e51616" stroke="#f3d5cf" stroke-width="2"/><path d="M3.500 7l3 4 6-7" fill="none" stroke="#fff" stroke-width="2.500"/></svg>${T("DRC=4", 70)}</div>
        <div class="status">${T("Loaded: sky130_inv Editing: sky130_inv Tool: box  Technology: sky130A", 707)}${T("(+2.73 +1.43) +2.24 +0.66 microns", 351)}</div>
      </div>

      <div class="row body">
        <div class="left">
          <div class="btn"><svg width="20" height="20" viewBox="0 0 20 20"><path d="M10 0l10 10h-7v10H7V10H0z" fill="#4682b4"/></svg></div>
          <div class="trough vt"><div class="mark"></div></div>
          <div class="btn"><svg width="20" height="20" viewBox="0 0 20 20"><path d="M10 20L0 10h7V0h6v10h7z" fill="#4682b4"/></svg></div>
          <div class="btn"><svg width="20" height="20" viewBox="0 0 20 20"><path d="M1.500 1.500h17v17h-17zM7 7h6v6H7z" fill="none" stroke="#4682b4" stroke-width="3"/></svg></div>
        </div>
        <div class="mid-col">
          <svg class="canvas" width="1624" height="643" viewBox="30 236 1624 643">${layout}</svg>
          <div class="hbar">
            <div class="btn"><svg width="20" height="20" viewBox="0 0 20 20"><path d="M0 10L10 0v7h10v6H10v7z" fill="#4682b4"/></svg></div>
            <div class="trough ht"><div class="mark"></div></div>
            <div class="btn"><svg width="20" height="20" viewBox="0 0 20 20"><path d="M20 10L10 0v7H0v6h10v7z" fill="#4682b4"/></svg></div>
          </div>
        </div>
        <div class="pal">
          ${TILES.map((t) => html`<div class="tile"><svg width="25" height="25" viewBox="0 0 25 25"><defs><pattern id="cp" width="2.400" height="2.400" patternUnits="userSpaceOnUse"><rect width="1.300" height="1.300" fill="#fff"/><rect x="1.200" y="1.200" width="1.200" height="1.200" fill="#fff"/></pattern><mask id="chk"><rect width="25" height="25" fill="url(#cp)"/></mask></defs>${t ? t.split("|").map(op) : ""}</svg></div>`)}
        </div>
      </div>

      <div class="row desktop"><div class="dock">${dock}</div></div>
      <div class="row gap"></div>

      <div class="row taskbar">
        ${APPS.map((a, i) => html`<div class="app ${i === 9 ? "on" : ""}">${i === 9 ? html`<div class="plate"></div>` : ""}
          <svg width="36" height="36" viewBox="0 0 36 36">${a}</svg>
          ${i === 3 ? html`<div class="badge">${T("29°", 24)}</div>` : ""}
          ${i === 9 || i > 11 ? html`<div class="ind"></div>` : ""}</div>`)}
        <div class="tray">
          <svg width="129" height="70" viewBox="1488 1010 129 70"><path d="M1491 1048l9-9 9 9" fill="none" stroke="#222" stroke-width="1.600"/>
            <path d="M1530 1051q-6 0-6-6 1-5 6-5 3-4 8-3.500 5 .5 7 5 3 1 3 5 0 4-4 4.500z" fill="#9c9c9c" stroke="#222" stroke-width="1.500"/><path d="M1525 1050q1-6 10-7l6 8z" fill="#dedede"/><circle cx="1541.500" cy="1049.500" r="6.500" fill="#d32a33"/><path d="M1539 1047l5 5M1544 1047l-5 5" stroke="#fff" stroke-width="1.400"/>
            <rect x="1567" y="1036" width="22.500" height="15" rx="2" fill="none" stroke="#222" stroke-width="1.700"/><path d="M1570 1040h17M1573 1044h12" stroke="#222" stroke-width="1.600" stroke-dasharray="1.600 2.200"/><path d="M1571 1047.500h14" stroke="#222" stroke-width="1.500"/></svg>
          <div class="stack lang">${T("ENG", 35)}${T("IN", 18)}</div>
          <svg width="98" height="70" viewBox="1680 1010 98 70"><g fill="none" stroke="#1c1c1c" stroke-width="1.600"><path d="M1680.500 1041q11.500-10.500 23 0M1684 1044.500q8-7.500 16 0M1687.500 1048q4.500-4.500 9 0"/><path d="M1717 1041h4l5-5v16l-5-5h-4zM1729 1040q3 4 0 8M1732 1037.500q5 6.500 0 13"/><path d="M1736 1035q6 9 0 18" stroke="#9bb9b8"/><rect x="1753" y="1037" width="19" height="14" rx="2.500"/></g><circle cx="1692" cy="1050.500" r="2.200" fill="#1c1c1c"/><rect x="1755.500" y="1039.500" width="9" height="9" fill="#1c1c1c"/><path d="M1773 1041l3 1v4l-3 1z" fill="#1c1c1c"/></svg>
          <div class="stack when">${T("18:07", 41)}${T("08-08-2022", 93)}</div>
        </div>
      </div>
    `;
  }
}
